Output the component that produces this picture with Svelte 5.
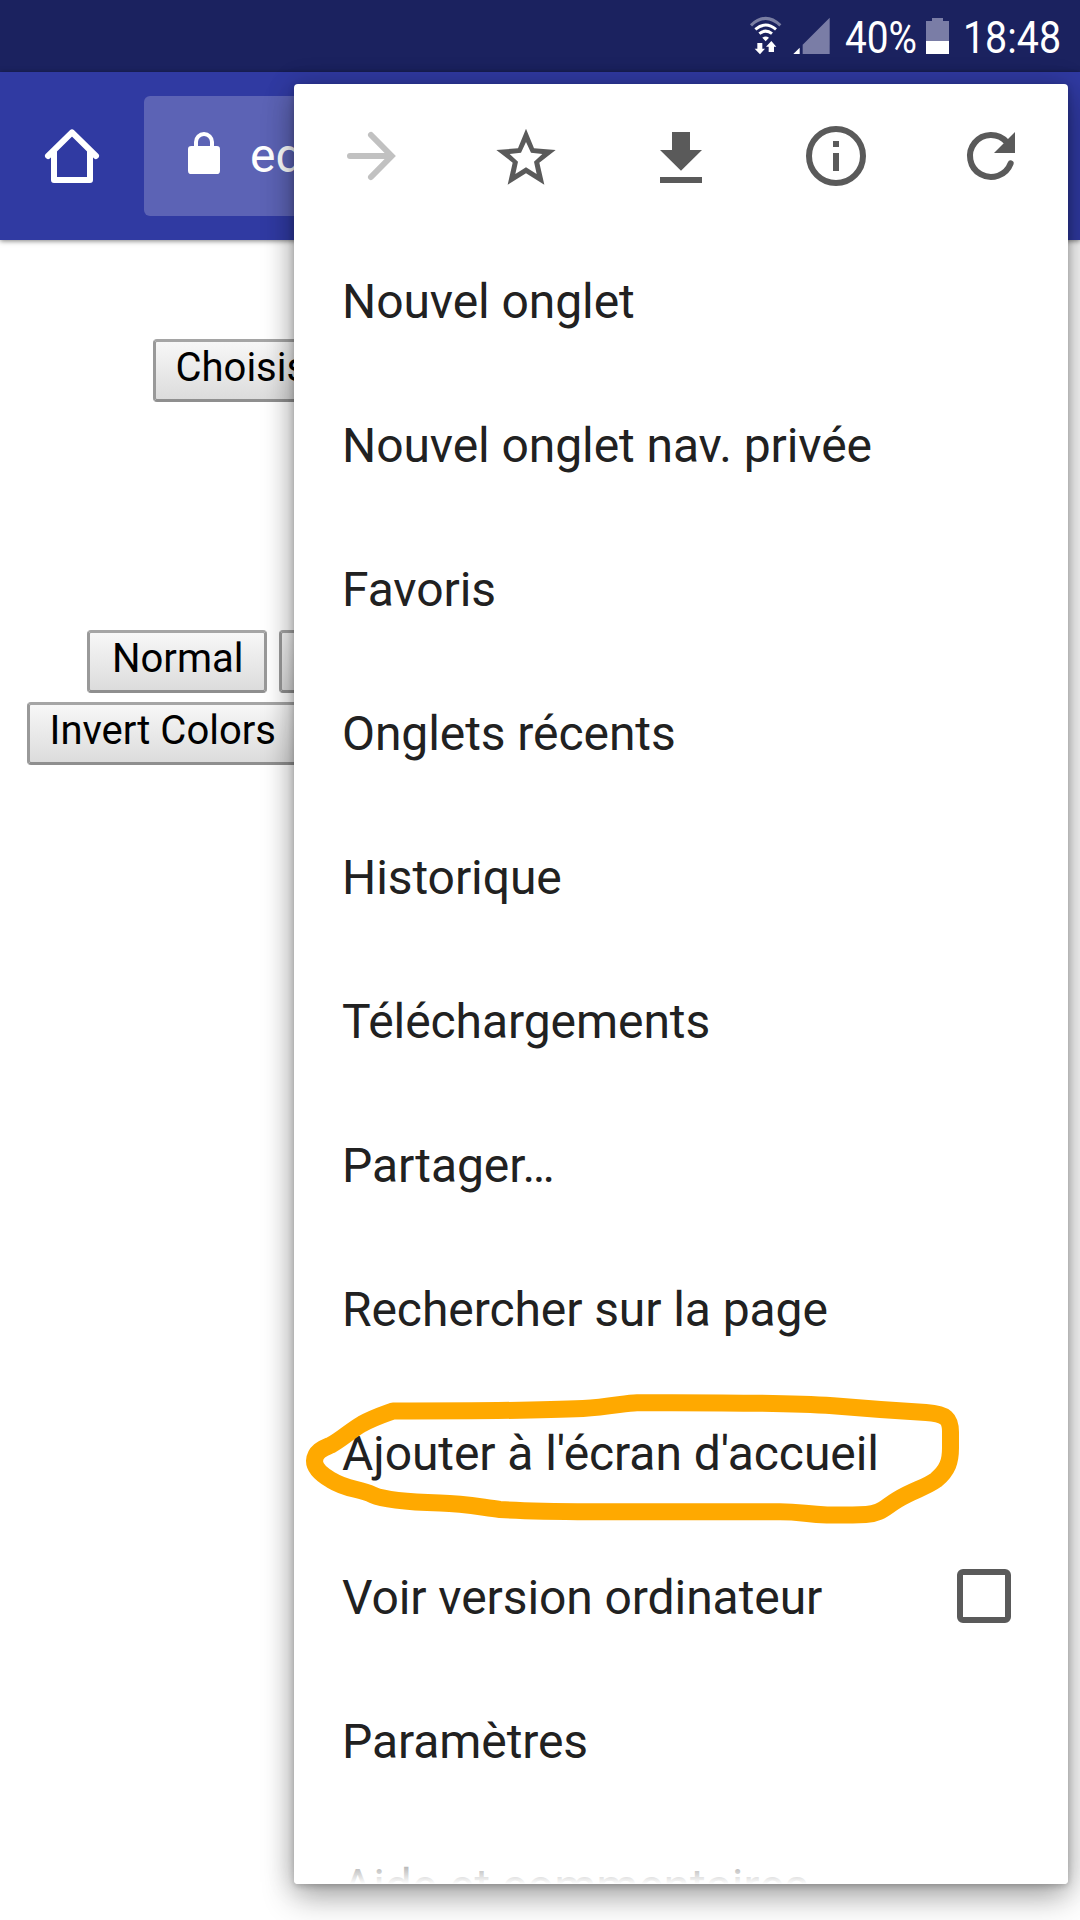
<script>
  const before = ['Nouvel onglet', 'Nouvel onglet nav. privée', 'Favoris', 'Onglets récents', 'Historique', 'Téléchargements', 'Partager…', 'Rechercher sur la page'];
</script>

<div class="screen">
  <header class="status">
    <svg class="wifi" width="32" height="72" viewBox="0 0 96 216">
      <g fill="none" stroke="#fff" stroke-width="9">
        <path d="M3 76Q47 34 91 76" opacity=".42" />
        <path d="M16 88Q47 62 78 88" />
        <path d="M28 101Q47 86 66 101" />
      </g>
      <path fill="#fff" d="M37 113Q47 106 57 113L47 124ZM22 129H37V146H45L30 163L14 146H22ZM56 156V140H48L64 123L79 140H72V156Z" />
    </svg>
    <svg class="signal" width="37" height="72" viewBox="0 0 111 216">
      <path fill="#fff" d="M1 162L20 143V162Z" />
      <path fill="#7a7da6" d="M29 162V134L110 53V162Z" />
    </svg>
    <svg class="percent" width="74" height="72"><text x="0" y="53" textLength="72" lengthAdjust="spacingAndGlyphs">40%</text></svg>
    <svg class="battery" width="24" height="72" viewBox="0 0 72 216">
      <path fill="#7a7da6" d="M0 63H18V54H51V63H69V123H0Z" />
      <path fill="#fff" d="M0 123H69V162H0Z" />
    </svg>
    <svg class="clock" width="100" height="72"><text x="0" y="53" textLength="98" lengthAdjust="spacingAndGlyphs">18:48</text></svg>
  </header>

  <nav class="toolbar">
    <svg class="home" width="72" height="72" viewBox="0 0 216 216" fill="none" stroke="#fff" stroke-width="18" stroke-linejoin="round" stroke-linecap="round">
      <path d="M36 108L108 37L180 108" />
      <path d="M54 94V180H162V94" />
    </svg>
    <div class="address">
      <svg width="32" height="42" viewBox="0 0 96 126">
        <rect y="42" width="96" height="84" rx="10" fill="#fff" />
        <path d="M24 48V30a24 24 0 0 1 48 0V48" fill="none" stroke="#fff" stroke-width="12" />
      </svg>
      <span>ed</span>
    </div>
  </nav>

  <main class="page">
    <div class="line file"><div class="btn wide">Choisis</div></div>
    <div class="line filters"><div class="btn normal">Normal</div><div class="btn wide"></div></div>
    <div class="line invert"><div class="btn wide">Invert Colors</div></div>
  </main>

  <section class="menu">
    <div class="actions">
      <svg viewBox="0 0 216 216" fill="none" stroke="#c1c1c1" stroke-width="18" stroke-linecap="round">
        <path d="M45 108H165M108 45L170 108L108 171" />
      </svg>
      <svg viewBox="0 0 216 216">
        <path fill-rule="evenodd" d="M108 26L132 85L197 90L148 128L163 194L108 160L53 194L68 128L19 90L84 85ZM108 66L93 98L59 102L84 125L76 162L108 142L140 162L132 125L157 102L123 98Z" />
      </svg>
      <svg viewBox="0 0 216 216">
        <path d="M81 36H135V90H171L108 152L45 90H81ZM45 171H171V189H45Z" />
      </svg>
      <svg viewBox="0 0 216 216">
        <circle cx="108" cy="108" r="81" fill="none" stroke="#5a5a5a" stroke-width="18" />
        <path d="M99 63H117V81H99ZM99 99H117V153H99Z" />
      </svg>
      <svg viewBox="0 0 216 216">
        <path d="M167 130A63 63 0 1 1 155 66" fill="none" stroke="#5a5a5a" stroke-width="18" stroke-linecap="round" />
        <path d="M180 36V99H117Z" />
      </svg>
    </div>
    {#each before as label}
      <div class="item"><span>{label}</span></div>
    {/each}
    <div class="item">
      <span>Ajouter à l'écran d'accueil</span>
      <svg class="ring" width="774" height="144" viewBox="294 1380 774 144">
        <path d="M393 1411C430 1411 530 1411 583 1408.500C610 1407 625 1403 637 1402.700C690 1402.500 790 1403 833 1405.700C860 1408 885 1410 926 1412.500C946 1414 951 1418 950.500 1434V1448C950.500 1461 948 1470 936 1480C925 1488 913 1490 897 1500C884 1508 880 1514 866 1514.500C855 1515 840 1515.200 827 1515C805 1514 800 1511.700 780 1511.700H590C555 1511.500 525 1511 500 1509.500C480 1507 465 1503.500 440 1503C405 1502 384 1500 373 1495C358 1488 347 1490 331 1480C319 1473 314.500 1467 314.500 1461C315 1451 324 1448 331 1445C342 1439 350 1431 362 1424C375 1417 385 1414 393 1411Z" />
      </svg>
    </div>
    <div class="item"><span>Voir version ordinateur</span><i class="check"></i></div>
    <div class="item"><span>Paramètres</span></div>
    <div class="item last"><span>Aide et commentaires</span></div>
    <div class="fade"></div>
  </section>
</div>

<style>
  :global(body) { margin: 0; background: #fff; }
  .screen { position: relative; width: 1080px; height: 1920px; overflow: hidden; background: #fff; font-family: Roboto, sans-serif; }
  svg { display: block; flex: none; overflow: visible; }
  .status { display: flex; justify-content: flex-end; height: 72px; padding-right: 17px; background: #1b225f; }
  .status text { font-size: 44px; fill: #fff; }
  .signal { margin-left: 11px; }
  .percent { margin-left: 15px; }
  .battery { margin-left: 7px; }
  .clock { margin-left: 13px; }
  .toolbar { position: relative; box-sizing: border-box; display: flex; align-items: center; height: 168px; padding-left: 36px; background: #303aa2; box-shadow: 0 1px 5px rgba(0, 0, 0, .5); }
  .address { box-sizing: border-box; display: flex; width: 800px; height: 120px; margin-left: 36px; padding: 36px 0 0 44px; background: #5c63b5; border-radius: 6px; }
  .address span { margin: -4px 0 0 30px; color: #fff; font-size: 48px; line-height: 56px; }
  .page { padding: 99px 120px 0 0; }
  .line { display: flex; gap: 12px; height: 63px; }
  .file { padding-left: 153px; }
  .filters { margin-top: 228px; padding-left: 87px; }
  .invert { margin-top: 9px; padding-left: 27px; }
  .btn { box-sizing: border-box; height: 63px; padding-left: 19.5px; border: 3px solid; border-color: #a5a5a5 #999 #8f8f8f #999; border-radius: 4px; background: linear-gradient(#f7f7f7, #dcdcdc); color: #000; font-size: 40px; line-height: 51px; white-space: nowrap; }
  .btn.wide { flex: 1; }
  .btn.normal { width: 180px; padding-left: 22px; }
  .menu { position: absolute; left: 294px; top: 84px; width: 774px; height: 1800px; background: #fff; border-radius: 4px; box-shadow: 0 14px 32px rgba(0, 0, 0, .3), 0 0 28px rgba(0, 0, 0, .18), 0 2px 6px rgba(0, 0, 0, .2); }
  .actions { display: grid; grid-template-columns: repeat(5, 155px); justify-content: center; justify-items: center; align-items: center; height: 144px; fill: #5a5a5a; }
  .actions svg { width: 72px; height: 72px; }
  .item { position: relative; box-sizing: border-box; display: flex; align-items: center; justify-content: space-between; height: 144px; padding: 3px 57px 0 48px; color: #212121; font-size: 48px; line-height: 56px; letter-spacing: -.08px; white-space: nowrap; }
  .check { box-sizing: border-box; width: 54px; height: 54px; margin-top: -3px; border: 6px solid #5a5a5a; border-radius: 6px; }
  .ring { position: absolute; left: 0; top: 0; fill: none; stroke: #ffa900; stroke-width: 17px; stroke-linejoin: round; }
  .last { height: 72px; padding-top: 47px; align-items: flex-start; overflow: hidden; }
  .fade { position: absolute; left: 0; right: 0; bottom: 0; height: 54px; background: linear-gradient(rgba(255, 255, 255, 0), #fff); border-radius: 4px; }
</style>
